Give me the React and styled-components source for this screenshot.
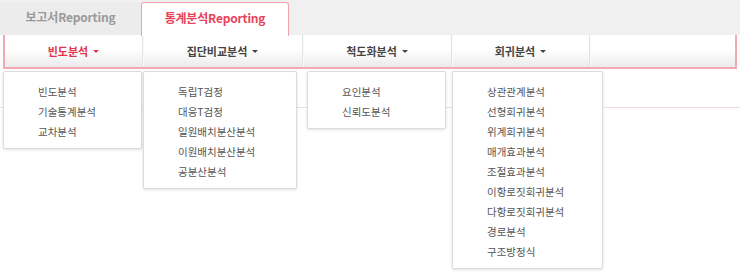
import React from 'react';
import styled, { createGlobalStyle } from 'styled-components';

const GlobalStyle = createGlobalStyle`
  body {
    margin: 0;
    background: #fff;
    font-family: "Noto Sans CJK KR", "Noto Sans", sans-serif;
  }
`;

const menus = [
  { title: '빈도분석', width: 138, active: true, drop: { left: -2, width: 139 }, items: ['빈도분석', '기술통계분석', '교차분석'] },
  { title: '집단비교분석', width: 160, drop: { left: 0, width: 154 }, items: ['독립T검정', '대응T검정', '일원배치분산분석', '이원배치분산분석', '공분산분석'] },
  { title: '척도화분석', width: 149, drop: { left: 4, width: 139 }, items: ['요인분석', '신뢰도분석'] },
  { title: '회귀분석', width: 138, drop: { left: 0, width: 151 }, items: ['상관관계분석', '선형회귀분석', '위계회귀분석', '매개효과분석', '조절효과분석', '이항로짓회귀분석', '다항로짓회귀분석', '경로분석', '구조방정식'] },
];

function App() {
  return (
    <Page>
      <GlobalStyle />
      <TabBar>
        <Tab>보고서Reporting</Tab>
        <Tab active>통계분석Reporting</Tab>
      </TabBar>
      <MenuBar>
        {menus.map((m) => (
          <MenuItem key={m.title} w={m.width}>
            <MenuTitle active={m.active}>
              {m.title}
              <Caret />
            </MenuTitle>
            <Dropdown left={m.drop.left} w={m.drop.width}>
              {m.items.map((it) => (
                <DropItem key={it}>{it}</DropItem>
              ))}
            </Dropdown>
          </MenuItem>
        ))}
        <MenuFiller />
      </MenuBar>
      <FaintLine />
    </Page>
  );
}

const Page = styled.div`
  width: 740px;
  height: 274px;
  position: relative;
  overflow: hidden;
`;

const TabBar = styled.div`
  display: flex;
  height: 35px;
  padding-top: 2px;
  box-sizing: border-box;
  background: #f0f0f0;
  position: relative;
  z-index: 2;
`;

const Tab = styled.div`
  width: ${(p) => (p.active ? '148px' : '141px')};
  height: ${(p) => (p.active ? '34px' : '33px')};
  box-sizing: border-box;
  display: flex;
  align-items: center;
  justify-content: center;
  padding-bottom: 4px;
  font-size: 12px;
  font-weight: bold;
  letter-spacing: -0.2px;
  color: ${(p) => (p.active ? '#e8435a' : '#9a9a9a')};
  background: ${(p) => (p.active ? '#fff' : '#ececec')};
  border: ${(p) => (p.active ? '1px solid #f0a3ad' : 'none')};
  border-bottom: none;
  border-radius: 3px 3px 0 0;
`;

const MenuBar = styled.div`
  display: flex;
  margin: -1px 3px 0 3px;
  height: 35px;
  box-sizing: border-box;
  border: 2px solid #f3a9b2;
  border-top-width: 1px;
  background: linear-gradient(#fff 0%, #fff 45%, #ebebeb 100%);
  position: relative;
  z-index: 1;
`;

const MenuItem = styled.div`
  position: relative;
  width: ${(p) => p.w}px;
  box-sizing: border-box;
  flex-shrink: 0;
  border-right: 1px solid #e2e2e2;
  box-shadow: 1px 0 0 #fafafa;
`;

const MenuFiller = styled.div`
  flex: 1;
`;

const MenuTitle = styled.div`
  height: 100%;
  display: flex;
  align-items: center;
  justify-content: center;
  font-size: 11px;
  font-weight: bold;
  color: ${(p) => (p.active ? '#e2334b' : '#444')};
`;

const Caret = styled.span`
  display: inline-block;
  margin-left: 5px;
  margin-top: 1px;
  border-left: 3px solid transparent;
  border-right: 3px solid transparent;
  border-top: 3px solid currentColor;
`;

const Dropdown = styled.div`
  position: absolute;
  top: 36px;
  left: ${(p) => p.left}px;
  width: ${(p) => p.w}px;
  box-sizing: border-box;
  padding: 10px 0 6px 34px;
  background: #fff;
  border: 1px solid #dcdcdc;
  border-radius: 2px;
  box-shadow: 0 1px 3px rgba(0, 0, 0, 0.12);
`;

const DropItem = styled.div`
  height: 20px;
  line-height: 20px;
  font-size: 10.5px;
  color: #555;
  white-space: nowrap;
`;

const FaintLine = styled.div`
  position: absolute;
  top: 107px;
  left: 0;
  right: 0;
  height: 1px;
  background: #f6dcdf;
  z-index: 0;
`;

export default App;
